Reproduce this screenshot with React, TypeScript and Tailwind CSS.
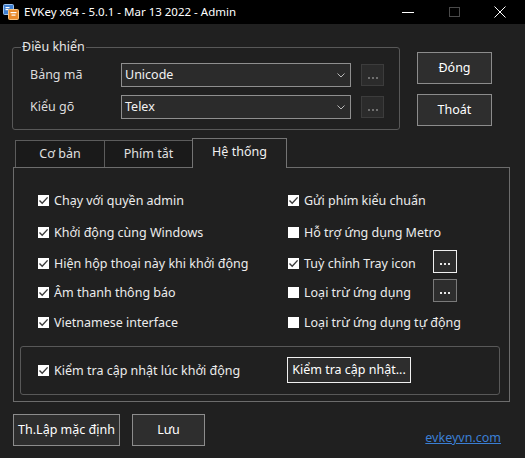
import React from "react";

const font = { fontFamily: '"Noto Sans", "Open Sans", sans-serif' };

function Check({ checked, label }: { checked: boolean; label: string }) {
  return (
    <div className="flex items-center">
      <div className="w-[11px] h-[11px] bg-white flex items-center justify-center shrink-0">
        {checked && (
          <svg width="11" height="11" viewBox="0 0 11 11">
            <path d="M1.5 5.6 L4.2 8.3 L9.6 2.4" fill="none" stroke="#3a3a3a" strokeWidth="1.4" />
          </svg>
        )}
      </div>
      <span className="ml-[5px] text-[12.5px] leading-[17px] text-[#ececec] whitespace-nowrap">{label}</span>
    </div>
  );
}

function Combo({ value }: { value: string }) {
  return (
    <div className="w-[230px] h-[24px] border border-[#8f8f8f] bg-[#2b2b2b] flex items-center justify-between pl-[3px] pr-[5px]">
      <span className="text-[12.5px] text-[#f2f2f2]">{value}</span>
      <svg width="8" height="5" viewBox="0 0 8 5">
        <path d="M0.5 0.5 L4 4 L7.5 0.5" fill="none" stroke="#b8b8b8" strokeWidth="1" />
      </svg>
    </div>
  );
}

function DisabledDots() {
  return (
    <div className="w-[23px] h-[22px] ml-[10px] bg-[#2b2b2b] border border-[#3c3c3c] flex items-end justify-center pb-[6px] gap-[2px]">
      <div className="w-[2px] h-[2px] bg-[#6f6f6f]" />
      <div className="w-[2px] h-[2px] bg-[#6f6f6f]" />
      <div className="w-[2px] h-[2px] bg-[#6f6f6f]" />
    </div>
  );
}

function DotsButton({ active }: { active: boolean }) {
  return (
    <div
      className={
        "w-[24px] h-[23px] bg-[#2d2d2d] border flex items-end justify-center pb-[7px] gap-[2px] " +
        (active ? "border-[#f0f0f0]" : "border-[#7a7a7a]")
      }
    >
      <div className="w-[2px] h-[2px] bg-[#e8e8e8]" />
      <div className="w-[2px] h-[2px] bg-[#e8e8e8]" />
      <div className="w-[2px] h-[2px] bg-[#e8e8e8]" />
    </div>
  );
}

export default function App() {
  return (
    <div className="w-[525px] h-[458px] bg-[#202020] flex flex-col overflow-hidden" style={font}>
      {/* Title bar */}
      <div className="h-[24px] bg-black flex items-center shrink-0">
        <svg width="16" height="16" viewBox="0 0 16 16" className="ml-[3px]">
          <rect x="0.5" y="0.5" width="10" height="10" rx="1" fill="#3f7fd0" stroke="#9cc3ef" strokeWidth="1" />
          <rect x="2.5" y="3" width="4" height="1.2" fill="#ffffff" />
          <rect x="2.5" y="5" width="3" height="1.2" fill="#ffffff" />
          <rect x="5.5" y="5.5" width="10" height="10" rx="1" fill="#e88a2c" stroke="#f7c27f" strokeWidth="1" />
          <rect x="7.5" y="8" width="6" height="1.2" fill="#ffffff" />
          <rect x="8.5" y="10.5" width="4" height="1.2" fill="#ffffff" />
        </svg>
        <span className="ml-[5px] text-[11.5px] text-white leading-[16px]">EVKey x64 - 5.0.1 - Mar 13 2022 - Admin</span>
        <div className="ml-auto flex items-center h-full">
          <div className="w-[46px] h-full flex items-center justify-center">
            <div className="w-[12px] h-[1px] bg-white" />
          </div>
          <div className="w-[46px] h-full flex items-center justify-center">
            <div className="w-[11px] h-[10px] border border-[#4a4a4a]" />
          </div>
          <div className="w-[46px] h-full flex items-center justify-center mr-[2px]">
            <svg width="12" height="12" viewBox="0 0 12 12">
              <path d="M0.5 0.5 L11.5 11.5 M11.5 0.5 L0.5 11.5" stroke="#ffffff" strokeWidth="1" />
            </svg>
          </div>
        </div>
      </div>

      {/* Top row */}
      <div className="flex mt-[15px]">
        <fieldset className="ml-[12px] w-[388px] border border-[#585858] rounded-[3px] pl-[17px] pt-[8px] pb-[10px]">
          <legend className="ml-[-9px] px-[1px] text-[12.5px] leading-[16px] text-[#e6e6e6]">Điều khiển</legend>
          <div className="flex items-center">
            <span className="w-[91px] text-[12.5px] text-[#dcdcdc]">Bảng mã</span>
            <Combo value="Unicode" />
            <DisabledDots />
          </div>
          <div className="flex items-center mt-[8px]">
            <span className="w-[91px] text-[12.5px] text-[#dcdcdc]">Kiểu gõ</span>
            <Combo value="Telex" />
            <DisabledDots />
          </div>
        </fieldset>
        <div className="ml-[17px] mt-[13px] flex flex-col gap-[10px]">
          <div className="w-[75px] h-[32px] border border-[#8c8c8c] bg-[#2e2e2e] flex items-center justify-center text-[12.5px] text-white">Đóng</div>
          <div className="w-[75px] h-[32px] border border-[#8c8c8c] bg-[#2e2e2e] flex items-center justify-center text-[12.5px] text-white">Thoát</div>
        </div>
      </div>

      {/* Tabs */}
      <div className="flex items-end h-[29px] mt-[8px] ml-[15px] relative z-10">
        <div className="w-[90px] h-[27px] border-l border-t border-r border-[#5c5c5c] bg-[#1a1a1a] flex items-center justify-center text-[12.5px] text-[#e0e0e0]">Cơ bản</div>
        <div className="w-[87px] h-[27px] border-t border-[#5c5c5c] bg-[#1a1a1a] flex items-center justify-center text-[12.5px] text-[#e0e0e0]">Phím tắt</div>
        <div className="w-[95px] h-[30px] mb-[-1px] border-l border-t border-r border-[#747474] bg-[#202020] flex items-center justify-center pb-[3px] text-[12.5px] text-[#f0f0f0]">Hệ thống</div>
      </div>

      {/* Panel */}
      <div className="ml-[13px] w-[497px] h-[235px] border border-[#6c6c6c] flex flex-col pt-[16px]">
        <div className="grid grid-cols-[250px_1fr] pl-[24px]">
          <div className="h-[32px] flex items-center"><Check checked label="Chạy với quyền admin" /></div>
          <div className="h-[32px] flex items-center"><Check checked label="Gửi phím kiểu chuẩn" /></div>
          <div className="h-[32px] flex items-center"><Check checked label="Khởi động cùng Windows" /></div>
          <div className="h-[32px] flex items-center"><Check checked={false} label="Hỗ trợ ứng dụng Metro" /></div>
          <div className="h-[30px] flex items-center"><Check checked label="Hiện hộp thoại này khi khởi động" /></div>
          <div className="h-[30px] flex items-center">
            <div className="w-[145px]"><Check checked label="Tuỳ chỉnh Tray icon" /></div>
            <div className="mb-[3px]"><DotsButton active /></div>
          </div>
          <div className="h-[28px] flex items-center"><Check checked label="Âm thanh thông báo" /></div>
          <div className="h-[28px] flex items-center">
            <div className="w-[145px]"><Check checked={false} label="Loại trừ ứng dụng" /></div>
            <div className="mb-[3px]"><DotsButton active={false} /></div>
          </div>
          <div className="h-[32px] flex items-center"><Check checked label="Vietnamese interface" /></div>
          <div className="h-[32px] flex items-center"><Check checked={false} label="Loại trừ ứng dụng tự động" /></div>
        </div>
        <div className="ml-[6px] mt-[8px] w-[480px] h-[49px] border border-[#585858] rounded-[3px] flex items-center pl-[17px]">
          <div className="w-[249px]"><Check checked label="Kiểm tra cập nhật lúc khởi động" /></div>
          <div className="w-[124px] h-[26px] border border-[#f0f0f0] bg-[#2d2d2d] flex items-center justify-center text-[12.5px] text-white mt-[-1px] whitespace-nowrap">Kiểm tra cập nhật...</div>
        </div>
      </div>

      {/* Bottom row */}
      <div className="flex mt-[12px] ml-[13px]">
        <div className="w-[107px] h-[32px] border border-[#8c8c8c] bg-[#2e2e2e] flex items-center justify-center text-[12.5px] text-white whitespace-nowrap">Th.Lập mặc định</div>
        <div className="ml-[12px] w-[73px] h-[32px] border border-[#8c8c8c] bg-[#2e2e2e] flex items-center justify-center text-[12.5px] text-white">Lưu</div>
        <span className="ml-auto mr-[24px] self-end mb-[-2px] text-[12.5px] text-[#3b7fd4] underline">evkeyvn.com</span>
      </div>
    </div>
  );
}
